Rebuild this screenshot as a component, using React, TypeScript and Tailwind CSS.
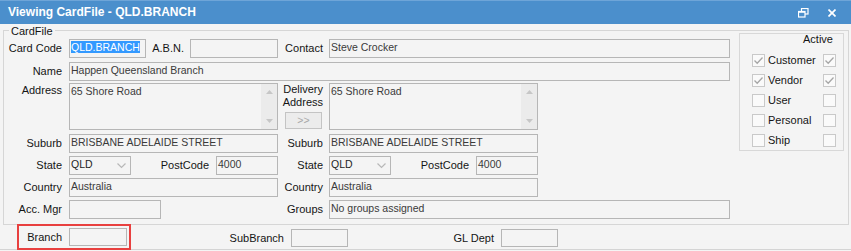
import React from "react";

const F = "font-['Liberation_Sans',Arial,sans-serif]";

function Label({ className = "", children }: { className?: string; children?: React.ReactNode }) {
  return (
    <div className={`shrink-0 text-right text-[11px] leading-[19px] text-[#141414] whitespace-nowrap ${className}`}>
      {children}
    </div>
  );
}

function Field({ className = "", children }: { className?: string; children?: React.ReactNode }) {
  return (
    <div
      className={`shrink-0 border border-[#b6b6b6] bg-[#f4f4f4] overflow-hidden whitespace-nowrap text-[10.5px] leading-[15px] text-[#3a3a3a] pl-[1px] ${className}`}
    >
      {children}
    </div>
  );
}

function Select({ className = "", value }: { className?: string; value: string }) {
  return (
    <div
      className={`shrink-0 h-[19px] border border-[#b6b6b6] bg-[#f4f4f4] flex items-start justify-between text-[10.5px] leading-[15px] text-[#1e1e1e] pl-[1px] pr-[4px] ${className}`}
    >
      <span>{value}</span>
      <svg width="9" height="6" viewBox="0 0 9 6" className="mt-[6px]">
        <polyline points="0.5,0.5 4.5,4.5 8.5,0.5" fill="none" stroke="#b8b8b8" strokeWidth="1.2" />
      </svg>
    </div>
  );
}

function TextArea({ value }: { value: string }) {
  return (
    <div className="shrink-0 w-[209px] h-[47px] border border-[#b6b6b6] bg-[#f4f4f4] flex">
      <div className="flex-1 pl-[1px] text-[10.5px] leading-[15px] text-[#3a3a3a] whitespace-nowrap">{value}</div>
      <div className="w-[16px] bg-[#ebebeb] flex flex-col items-center justify-between pt-[6px] pb-[6px]">
        <svg width="7" height="4" viewBox="0 0 7 4">
          <polygon points="0,4 3.5,0 7,4" fill="#c6c6c6" />
        </svg>
        <svg width="7" height="4" viewBox="0 0 7 4">
          <polygon points="0,0 3.5,4 7,0" fill="#c6c6c6" />
        </svg>
      </div>
    </div>
  );
}

function Check({ checked }: { checked: boolean }) {
  return (
    <div className="shrink-0 w-[13px] h-[13px] border border-[#c9c9c9] bg-[#fafafa] flex items-center justify-center">
      {checked && (
        <svg width="11" height="11" viewBox="0 0 11 11">
          <polyline points="1.5,5.5 4.2,8.3 9.5,2.5" fill="none" stroke="#a6a6a6" strokeWidth="1.3" />
        </svg>
      )}
    </div>
  );
}

function ActiveRow({ label, checked }: { label: string; checked: boolean }) {
  return (
    <div className="flex items-center h-[13px] pl-[12px] pr-[7px]">
      <Check checked={checked} />
      <div className="flex-1 ml-[3px] text-[11px] leading-[13px] text-[#141414]">{label}</div>
      <Check checked={checked} />
    </div>
  );
}

export default function App() {
  return (
    <div className={`w-[851px] h-[251px] bg-[#f4f4f4] overflow-hidden ${F}`}>
      {/* Title bar */}
      <div className="h-[24px] bg-[#4b8fcc] border-t border-[#6ea5d8] flex items-center text-white">
        <div className="pl-[8px] text-[12px] font-bold leading-[23px]">Viewing CardFile - QLD.BRANCH</div>
        <div className="ml-auto flex items-center pr-[15px]">
          <svg width="11" height="10" viewBox="0 0 11 10" className="mt-[1px]">
            <rect x="3.5" y="0.5" width="6.5" height="5.5" fill="none" stroke="white" strokeWidth="1.2" />
            <rect x="0.5" y="3.5" width="6.5" height="5.5" fill="#4b8fcc" stroke="white" strokeWidth="1.2" />
            <line x1="0.5" y1="4" x2="7" y2="4" stroke="white" strokeWidth="1.5" />
          </svg>
          <svg width="8" height="8" viewBox="0 0 8 8" className="ml-[19px] mt-[1px]">
            <line x1="0.5" y1="0.5" x2="7.5" y2="7.5" stroke="white" strokeWidth="1.7" />
            <line x1="7.5" y1="0.5" x2="0.5" y2="7.5" stroke="white" strokeWidth="1.7" />
          </svg>
        </div>
      </div>

      {/* CardFile group */}
      <div className="relative ml-[3px] mt-[6px] w-[846px] h-[195px] border border-[#d6d6d6] flex">
        <div className="absolute left-[5px] top-[-6px] px-[2px] bg-[#f4f4f4] text-[11px] leading-[13px] text-[#141414]">
          CardFile
        </div>

        {/* Left form */}
        <div className="w-[726px] shrink-0 pt-[8px] flex flex-col">
          {/* Row 1 */}
          <div className="flex items-start h-[19px]">
            <Label className="w-[58px]">Card Code</Label>
            <Field className="ml-[7px] w-[77px] h-[19px]">
              <span className="bg-[#3399ff] text-white">QLD.BRANCH</span>
            </Field>
            <Label className="w-[38px]">A.B.N.</Label>
            <Field className="ml-[6px] w-[88px] h-[19px]" />
            <Label className="w-[45px]">Contact</Label>
            <Field className="ml-[6px] w-[401px] h-[19px]">Steve Crocker</Field>
          </div>

          {/* Row 2 */}
          <div className="flex items-start h-[19px] mt-[4px]">
            <Label className="w-[58px]">Name</Label>
            <Field className="ml-[7px] w-[661px] h-[19px]">Happen Queensland Branch</Field>
          </div>

          {/* Row 3 */}
          <div className="flex items-start h-[47px] mt-[2px]">
            <div className="w-[58px] shrink-0 text-right text-[11px] leading-[13px] mt-[1px] text-[#141414]">Address</div>
            <div className="ml-[7px]">
              <TextArea value="65 Shore Road" />
            </div>
            <div className="w-[45px] shrink-0 flex flex-col items-end">
              <div className="text-right text-[11px] leading-[13px] text-[#141414]">
                Delivery
                <br />
                Address
              </div>
              <div className="mt-[3px] mr-[1px] w-[37px] h-[17px] border border-[#c4c4c4] bg-[#ececec] text-center text-[10.5px] leading-[14px] text-[#a8a8a8]">
                &gt;&gt;
              </div>
            </div>
            <div className="ml-[6px]">
              <TextArea value="65 Shore Road" />
            </div>
          </div>

          {/* Row 4 */}
          <div className="flex items-start h-[19px] mt-[4px]">
            <Label className="w-[58px]">Suburb</Label>
            <Field className="ml-[7px] w-[209px] h-[19px]">BRISBANE ADELAIDE STREET</Field>
            <Label className="w-[45px]">Suburb</Label>
            <Field className="ml-[6px] w-[209px] h-[19px]">BRISBANE ADELAIDE STREET</Field>
          </div>

          {/* Row 5 */}
          <div className="flex items-start h-[19px] mt-[3px]">
            <Label className="w-[58px]">State</Label>
            <Select className="ml-[7px] w-[62px]" value="QLD" />
            <Label className="w-[78px]">PostCode</Label>
            <Field className="ml-[7px] w-[62px] h-[19px]">4000</Field>
            <Label className="w-[45px]">State</Label>
            <Select className="ml-[6px] w-[62px]" value="QLD" />
            <Label className="w-[78px]">PostCode</Label>
            <Field className="ml-[7px] w-[62px] h-[19px]">4000</Field>
          </div>

          {/* Row 6 */}
          <div className="flex items-start h-[19px] mt-[3px]">
            <Label className="w-[58px]">Country</Label>
            <Field className="ml-[7px] w-[209px] h-[19px]">Australia</Field>
            <Label className="w-[45px]">Country</Label>
            <Field className="ml-[6px] w-[209px] h-[19px]">Australia</Field>
          </div>

          {/* Row 7 */}
          <div className="flex items-start h-[19px] mt-[3px]">
            <Label className="w-[58px]">Acc. Mgr</Label>
            <Field className="ml-[7px] w-[92px] h-[19px]" />
            <Label className="w-[162px]">Groups</Label>
            <Field className="ml-[6px] w-[401px] h-[19px] text-[#1e1e1e]">No groups assigned</Field>
          </div>
        </div>

        {/* Active box */}
        <div className="ml-[9px] mt-[2px] w-[105px] h-[118px] shrink-0 border border-[#d8d8d8]">
          <div className="-mt-[2px] h-[14px] pr-[10px] text-right text-[11px] leading-[14px] text-[#141414]">Active</div>
          <div className="mt-[8px] flex flex-col gap-[7px]">
            <ActiveRow label="Customer" checked={true} />
            <ActiveRow label="Vendor" checked={true} />
            <ActiveRow label="User" checked={false} />
            <ActiveRow label="Personal" checked={false} />
            <ActiveRow label="Ship" checked={false} />
          </div>
        </div>
      </div>

      {/* Bottom row */}
      <div className="flex items-start h-[24px]">
        <div className="relative z-10 -mt-[1px] ml-[17px] w-[114px] h-[26px] shrink-0 border-2 border-[#e8403f] flex items-start">
          <Label className="w-[43px] mt-[2px]">Branch</Label>
          <Field className="ml-[7px] mt-[2px] w-[58px] h-[18px]" />
        </div>
        <Label className="w-[153px] mt-[4px] leading-[18px]">SubBranch</Label>
        <Field className="ml-[7px] mt-[4px] w-[57px] h-[18px]" />
        <Label className="w-[146px] mt-[4px] leading-[18px]">GL Dept</Label>
        <Field className="ml-[7px] mt-[4px] w-[57px] h-[18px]" />
      </div>
      <div className="h-[1px] bg-[#d4d4d4]" />
    </div>
  );
}
